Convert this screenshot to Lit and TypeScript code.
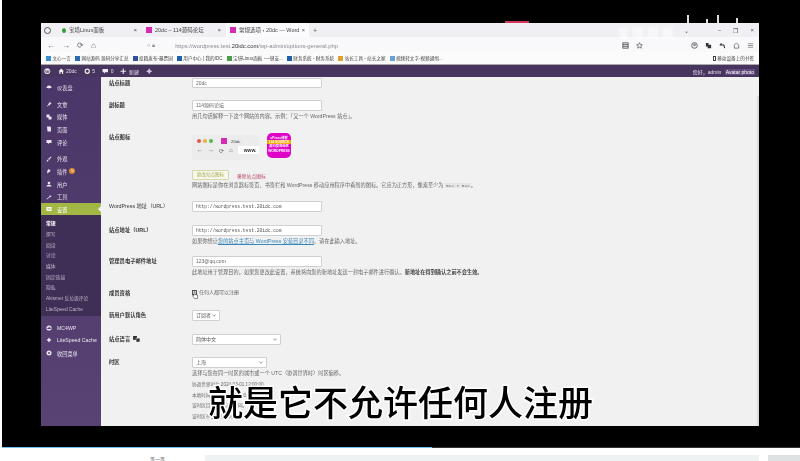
import { LitElement, html, css, svg } from "lit";
import { customElement } from "lit/decorators.js";

const menuIcon = (k: string) => {
  const shapes: Record<string, unknown> = {
    gauge: svg`<path d="M1 8a5 5 0 0 1 10 0z"/><rect x="5" y="5" width="2" height="4"/>`,
    pin: svg`<path d="M7 1l4 4-2 1-2 3-1-1-3 3-1-1 3-3-1-1 3-2z"/>`,
    media: svg`<rect x="1" y="1" width="6" height="6"/><rect x="5" y="5" width="6" height="6"/>`,
    page: svg`<path d="M2 1h7l1 2v8H3z"/>`,
    comment: svg`<path d="M1 2h10v6H6l-2 3V8H1z"/>`,
    brush: svg`<path d="M10 1l1 1-5 6-2-2zM3 7l2 2-1 2H1z"/>`,
    plug: svg`<path d="M4 1l2 3 2-1 1 2-2 3-2 1-2 2-1-1 1-2-1-2 2-2z"/>`,
    user: svg`<circle cx="6" cy="4" r="2.6"/><path d="M1 11c0-5 10-5 10 0z"/>`,
    tool: svg`<path d="M10 1L7 3v2L1 10l1 1 6-5h2l1-3-2 1-1-1z"/>`,
    settings: svg`<rect x="1" y="2" width="10" height="8"/><path d="M3 4h6v1H3zM3 7h6v1H3z" fill="#a3b745"/>`,
    cloud: svg`<circle cx="6" cy="6" r="5.2"/><path d="M3 8h6a1.6 1.6 0 0 0-1-3 2 2 0 0 0-3.6 1A1 1 0 0 0 3 8z" fill="#4f3a6d"/>`,
    gem: svg`<path d="M6 1l2 3 3 2-3 2-2 3-2-3-3-2 3-2z"/>`,
    collapse: svg`<circle cx="6" cy="6" r="5"/><circle cx="6" cy="6" r="1.8" fill="#4f3a6d"/>`,
  };
  return html`<svg class="mi" viewBox="0 0 12 12" fill="currentColor">${shapes[k]}</svg>`;
};

const chev = svg`<path d="M.3.5L2 2.300 3.700.5" fill="none" stroke="#555" stroke-width=".6"/>`;

const groupA = [["gauge", "仪表盘", "mt"], ["pin", "文章", "mt4"], ["media", "媒体", ""], ["page", "页面", ""], ["comment", "评论", ""]];
const groupB = [["brush", "外观", "mt5"], ["plug", "插件", ""], ["user", "用户", ""], ["tool", "工具", ""]];
const subs = ["撰写", "阅读", "讨论", "媒体", "固定链接", "隐私", "Akismet 反垃圾评论", "LiteSpeed Cache"];
const bookmarks: [string, string][] = [
  ["#3a8fd0", "文心一言"], ["#2b6cb0", "网站源码 源码分享汇总"], ["#30509a", "投稿发布-暴票园"],
  ["#1d5fa8", "用户中心 | 我的IDC"], ["#4aa04a", "宝塔Linux面板 -一键安..."], ["#1d5fa8", "财务系统 - 财务系统"],
  ["#e0a030", "站长工具 - 站长之家"], ["#6a9fd8", "视频转文字-视频通缉..."],
];

@customElement("app-root")
export class AppRoot extends LitElement {
  static styles = css`
    :host { display: block; width: 800px; height: 461px; overflow: hidden; background: #fff; font-family: "Liberation Sans","Noto Sans CJK SC",sans-serif; position: relative; }
    .video { height: 447px; margin-left: 2px; background: #000; padding: 23px 41px 0 39px; box-sizing: border-box; }
    .progress { height: 1px; margin-left: 2px; background: linear-gradient(90deg,#6fc3ee 0,#6fc3ee 430px,#333 430px,#333 100%); }
    .below { display: flex; height: 13px; padding: 7px 0 0 150px; box-sizing: border-box; gap: 9px; }
    .below span { font-size: 5px; color: #666; width: 46px; }
    .below i { flex: 1; background: #eef2f2; height: 7px; display: block; }
    .below b { width: 32px; height: 7px; background: #dfe2e2; display: block; }

    .win { width: 718px; height: 403px; background: #f1f1f1; display: flex; flex-direction: column; overflow: hidden; filter: blur(0.6px); color: #3c434a; }
    .tabs { height: 14px; background: #f0f0f4; display: flex; align-items: center; padding-left: 3px; flex: none; }
    .tabs .acct { width: 7px; height: 7px; border: 1px solid #555; border-radius: 50%; box-sizing: border-box; margin-right: 7px; }
    .tab { width: 83px; height: 14px; display: flex; align-items: center; gap: 3px; font-size: 5.5px; color: #444; padding: 0 4px; box-sizing: border-box; margin-right: 1px; white-space: nowrap; }
    .tab.on { background: #fbfbfd; }
    .tab .t { flex: 1; overflow: hidden; }
    .fav { width: 6px; height: 6px; background: #d62bb5; flex: none; }
    .fav.g { background: #3c9a3c; border-radius: 50%; width: 4px; height: 5px; }
    .plus { font-size: 7px; color: #666; margin-left: 3px; }
    .winbtns { margin-left: auto; display: flex; gap: 12px; padding-right: 5px; font-size: 6px; color: #555; align-items: center; }
    .winbtns .sp { width: 5px; }

    .bar { height: 15px; background: #f9f9fb; display: flex; align-items: center; padding: 2px 5px 0 6px; box-sizing: border-box; flex: none; color: #555; }
    .navs { display: flex; gap: 7px; font-size: 8px; width: 100px; color: #666; }
    .addr { font-size: 5.8px; color: #8a8a95; flex: 1; display: flex; align-items: center; gap: 4px; }
    .addr b { color: #333; font-weight: 400; }
    .addr .u { margin-left: 16px; }
    .tools { display: flex; gap: 7px; align-items: center; }
    .tools svg { width: 7px; height: 7px; }
    .tools.left { margin-right: 48px; }

    .marks { height: 13px; background: #fbfbfc; display: flex; align-items: center; padding-left: 5px; font-size: 4.6px; color: #444; flex: none; border-bottom: 1px solid #aaa; box-sizing: border-box; white-space: nowrap; }
    .mark { display: flex; align-items: center; gap: 1.5px; margin-right: 4px; }
    .mark i { width: 5px; height: 5px; display: block; flex: none; }
    .marks .end { margin-left: auto; margin-right: 5px; display: flex; align-items: center; gap: 1px; }
    .marks .end i { width: 3px; height: 5px; border: 1px solid #444; box-sizing: border-box; display: block; }

    .admin { height: 12px; background: #47345f; display: flex; align-items: center; color: #e4e0ea; font-size: 5px; padding: 0 4px 0 3px; flex: none; white-space: nowrap; }
    .admin .it { display: flex; align-items: center; gap: 2px; margin-right: 7px; }
    .admin svg { width: 6.5px; height: 6.5px; }
    .admin .me { margin-left: auto; }
    .admin .me em { font-style: normal; color: #fff; background: #5f4a7a; padding: 0 1px; margin-left: 2px; }

    .body { flex: 1; display: flex; min-height: 0; position: relative; }
    .side { width: 60px; flex: none; background: linear-gradient(#4a3668,#594274); color: #e8e4ee; font-size: 5.2px; }
    .item { height: 12.7px; display: flex; align-items: center; gap: 5px; padding-left: 5px; white-space: nowrap; }
    .item.mt { margin-top: 4px; }
    .item.mt4 { margin-top: 4px; }
    .item.mt5 { margin-top: 4px; }
    .item.cur { background: #a3b745; color: #fff; height: 12px; position: relative; }
    .item.cur::after { content: ""; position: absolute; right: 0; top: 3px; border: 3px solid transparent; border-right-color: #f1f1f1; }
    .mi { width: 6px; height: 6px; flex: none; }
    .badge { width: 6px; height: 6px; border-radius: 50%; background: #d98a2b; color: #fff; font-size: 4px; line-height: 6px; text-align: center; margin-left: -3px; }
    .sub { background: #3f2f57; padding: 4px 0 1px 5px; font-size: 4.8px; color: #bdb5c9; margin-bottom: 5px; }
    .sub div { height: 10.7px; line-height: 10.7px; white-space: nowrap; }
    .sub .first { color: #fff; font-weight: 700; }

    .main { flex: 1; padding: 1px 0 0 8px; font-size: 5.3px; color: #3c434a; position: relative; overflow: hidden; }
    .row { display: grid; grid-template-columns: 83px 1fr; align-items: start; }
    .g12 { margin-bottom: 12px; } .g13 { margin-bottom: 13px; } .g11 { margin-bottom: 11px; } .g10 { margin-bottom: 10px; }
    .lab { font-weight: 700; color: #333; line-height: 10px; white-space: nowrap; display: flex; align-items: center; gap: 3px; }
    .lab.thin { font-weight: 400; }
    .inp { width: 130px; height: 10px; background: #fff; border: 1px solid #d0d0d4; border-radius: 1px; box-sizing: border-box; font-size: 5px; line-height: 8px; padding-left: 3px; color: #666; white-space: nowrap; }
    .inp.mono { font-family: "Liberation Mono",monospace; font-size: 4.6px; color: #555; }
    .inp.h11 { height: 11px; line-height: 9px; }
    .d { font-size: 5.2px; color: #666; margin-top: 1px; line-height: 8px; white-space: nowrap; }
    .d a { color: #3a86b8; text-decoration: underline; }
    .d code { background: #e6e6e6; padding: 0 1px; font-size: 4.4px; font-family: "Liberation Mono",monospace; }
    .d strong { color: #444; }
    .icons { display: flex; gap: 8px; align-items: flex-start; padding-top: 1px; }
    .prev { width: 67px; height: 25px; background: #ececec; margin-top: 2px; box-sizing: border-box; padding: 3px 0 0 5px; }
    .dots { display: flex; gap: 2px; align-items: center; font-size: 4.4px; }
    .dots i { width: 4px; height: 4px; border-radius: 50%; display: block; }
    .dots .r { background: #e8574f; } .dots .o { background: #eab13c; } .dots .n { background: #5db54c; }
    .dots u { width: 6px; height: 6px; background: #d62bb5; margin: 0 2px 0 6px; display: block; }
    .navp { display: flex; gap: 5px; font-size: 6px; margin-top: 2px; align-items: center; color: #555; }
    .navp span.www { background: #fff; font-weight: 700; padding: 1px 2px 1px 6px; font-size: 5px; color: #333; flex: 1; }
    .logo { width: 24px; height: 25px; border-radius: 5px; background: #e003c8; color: #fff; font-size: 3.3px; line-height: 4.2px; text-align: center; font-weight: 700; padding-top: 3px; box-sizing: border-box; white-space: nowrap; overflow: hidden; }
    .logo span { display: block; }
    .logo .y { background: #f5a800; }
    .btns { display: flex; align-items: center; gap: 8px; margin-top: 10px; }
    .btn { width: 37px; height: 10px; border: 1px solid #d5d8a8; background: #f7f7ee; color: #a7ad4a; font-size: 4.6px; line-height: 8px; text-align: center; box-sizing: border-box; border-radius: 1px; }
    .rm { color: #b3445e; font-size: 4.8px; }
    .chk { display: flex; align-items: center; gap: 2px; font-size: 5px; color: #666; line-height: 8px; position: relative; }
    .chk i { width: 5px; height: 5px; border: 1px solid #555; box-sizing: border-box; background: #fff; display: block; position: relative; }
    .cursor { position: absolute; left: 0; top: 3px; width: 6px; height: 8px; }
    .sel { height: 11px; background: #fff; border: 1px solid #d0d0d4; box-sizing: border-box; border-radius: 1px; font-size: 5px; line-height: 9px; padding: 0 3px; display: flex; justify-content: space-between; align-items: center; color: #555; }
    .w28 { width: 28px; } .w89 { width: 89px; } .w75 { width: 75px; }
    .chev { width: 4px; height: 3px; }
    .tiny { font-size: 4.6px; color: #666; line-height: 10.6px; margin-top: 3px; }
    .scroll { position: absolute; right: 0; top: 19px; bottom: 0; width: 2px; background: #dcdcdc; }

    .caption { position: absolute; left: 208px; top: 381px; font-family: "Noto Sans CJK SC",sans-serif; font-size: 35px; line-height: 40px; font-weight: 500; color: #000; white-space: nowrap; -webkit-text-stroke: 3px #fff; paint-order: stroke fill; filter: blur(0.3px); }
    .red { position: absolute; left: 505px; top: 21px; width: 24px; height: 2px; background: #d3355a; filter: blur(0.5px); }
    .wm { position: absolute; left: 617px; top: 24px; font-size: 12px; font-weight: 700; letter-spacing: 3px; color: rgba(255,255,255,.75); filter: blur(1.2px); white-space: nowrap; }
    .tick { position: absolute; top: 15px; width: 2px; height: 8px; background: #ddd; filter: blur(.6px); }
    .t1 { left: 687px; } .t2 { left: 706px; top: 19px; height: 4px; } .t3 { left: 717px; } .t4 { left: 736px; top: 18px; height: 5px; }
  `;

  render() {
    return html`
      <div class="video">
        <div class="win">
          <div class="tabs">
            <span class="acct"></span>
            <div class="tab"><span class="fav g"></span><span class="t">宝塔Linux面板</span>×</div>
            <div class="tab"><span class="fav"></span><span class="t">20dc – 114源码论坛</span>×</div>
            <div class="tab on"><span class="fav"></span><span class="t">常规选项 ‹ 20dc — WordPress</span>×</div>
            <span class="plus">+</span>
            <div class="winbtns"><span>⌄</span><span class="sp"></span><span>−</span><span>❐</span><span>×</span></div>
          </div>
          <div class="bar">
            <div class="navs"><span>←</span><span>→</span><span>⟳</span><span>⌂</span></div>
            <div class="addr"><span>○ 🔒︎</span><span class="u">https://wordpress.test.<b>20idc.com</b>/wp-admin/options-general.php</span></div>
            <div class="tools left">
              <svg viewBox="0 0 8 8" fill="none" stroke="#555"><rect x="1" y="1" width="6" height="6"/><path d="M1 3h6M1 5h6"/></svg>
              <svg viewBox="0 0 8 8" fill="none" stroke="#555" stroke-width=".8"><path d="M4 .8l1 2.2 2.3.2-1.8 1.5.6 2.4L4 5.8 1.900 7.100l.6-2.400L.7 3.200 3 3z"/></svg>
            </div>
            <div class="tools">
              <svg viewBox="0 0 8 8" fill="none" stroke="#555"><circle cx="4" cy="4" r="3.200"/><circle cx="4" cy="3.300" r="1"/></svg>
              <svg viewBox="0 0 8 8" fill="#333"><path d="M1 1h3v2h3v4H3V5H1z"/></svg>
              <svg viewBox="0 0 8 8" fill="none" stroke="#333" stroke-width="1.200"><path d="M1 3.500h4.500L6.500 7M1 3.500L3 1.500"/></svg>
              <svg viewBox="0 0 8 8" fill="none" stroke="#555" stroke-width=".8"><path d="M4 1L1.500 3.500V7h5V3.500z"/></svg>
              <svg viewBox="0 0 8 8" fill="#999"><path d="M1 1.500h6v1H1zM1 3.500h6v1H1zM1 5.500h6v1H1z"/></svg>
            </div>
          </div>
          <div class="marks">
            ${bookmarks.map(([c, t]) => html`<span class="mark"><i style="background:${c}"></i>${t}</span>`)}
            <span class="end"><i></i>移动设备上的书签</span>
          </div>
          <div class="admin">
            <span class="it"><svg viewBox="0 0 12 12"><circle cx="6" cy="6" r="5.500" fill="#ddd"/><path d="M2.500 4l2 5 1.500-4 1.500 4 2-5" fill="none" stroke="#47345f" stroke-width="1.200"/></svg></span>
            <span class="it"><svg viewBox="0 0 12 12" fill="#eee"><path d="M6 1l5 5H9.500v5h-2V8h-3v3h-2V6H1z"/></svg>20dc</span>
            <span class="it"><svg viewBox="0 0 12 12" fill="none" stroke="#eee" stroke-width="2.200"><circle cx="6" cy="6" r="3.800"/></svg>5</span>
            <span class="it"><svg viewBox="0 0 12 12" fill="#eee"><path d="M1 2h10v6H6l-2 3V8H1z"/></svg>0</span>
            <span class="it"><svg viewBox="0 0 12 12" fill="#eee"><path d="M5 1h2v4h4v2H7v4H5V7H1V5h4z"/></svg>新建</span>
            <span class="it"><svg viewBox="0 0 12 12" fill="#cfc6dc"><path d="M6 0l2 4 4 2-4 2-2 4-2-4-4-2 4-2z"/></svg></span>
            <span class="me">您好，admin <em>Avatar photo</em></span>
          </div>
          <div class="body">
            <nav class="side">
              ${groupA.map(([i, t, c]) => html`<div class="item ${c}">${menuIcon(i)}${t}</div>`)}
              ${groupB.map(([i, t, c]) => html`<div class="item ${c}">${menuIcon(i)}${t}${t === "插件" ? html`<span class="badge">5</span>` : ""}</div>`)}
              <div class="item cur">${menuIcon("settings")}设置</div>
              <div class="sub">
                <div class="first">常规</div>
                ${subs.map((s) => html`<div>${s}</div>`)}
              </div>
              <div class="item">${menuIcon("cloud")}MC4WP</div>
              <div class="item">${menuIcon("gem")}LiteSpeed Cache</div>
              <div class="item">${menuIcon("collapse")}收回菜单</div>
            </nav>
            <main class="main">
              <div class="row g12"><div class="lab">站点标题</div><div class="inp">20dc</div></div>
              <div class="row g12"><div class="lab">副标题</div><div>
                <div class="inp h11">114源码论坛</div>
                <div class="d">用几句话解释一下这个网站的内容。示例：「又一个 WordPress 站点」。</div>
              </div></div>
              <div class="row g11"><div class="lab">站点图标</div><div>
                <div class="icons">
                  <div class="prev">
                    <div class="dots"><i class="r"></i><i class="o"></i><i class="n"></i><u></u>20dc</div>
                    <div class="navp"><span>←</span><span>→</span><span>⟳</span><span>⌂</span><span class="www">www.</span></div>
                  </div>
                  <div class="logo"><span>oPress博客</span><span class="y">114 SOURCE</span><span>源码交流社区</span><span>WORDPRESS</span></div>
                </div>
                <div class="btns"><div class="btn">更改站点图标</div><span class="rm">移除站点图标</span></div>
                <div class="d">网站图标是你在浏览器标签页、书签栏和 WordPress 移动应用程序中看到的图标。它应为正方形，像素至少为 <code>512 × 512</code>。</div>
              </div></div>
              <div class="row g13"><div class="lab thin">WordPress 地址（URL）</div><div class="inp mono h11">http://wordpress.test.20idc.com</div></div>
              <div class="row g11"><div class="lab">站点地址（URL）</div><div>
                <div class="inp mono h11">http://wordpress.test.20idc.com</div>
                <div class="d">如果你想让<a>您的站点主页与 WordPress 安装目录不同</a>，请在此输入地址。</div>
              </div></div>
              <div class="row g12"><div class="lab">管理员电子邮件地址</div><div>
                <div class="inp h11">123@qq.com</div>
                <div class="d">此地址用于管理目的。如果您更改此设置，系统将向您的新地址发送一封电子邮件进行确认。<strong>新地址在得到确认之前不会生效。</strong></div>
              </div></div>
              <div class="row g12"><div class="lab">成员资格</div><div class="chk"><i></i>任何人都可以注册
                <svg class="cursor" viewBox="0 0 6 8"><path d="M2 .5v4L1 4 .6 5 2.500 7.500h3V4L3 3.500V.5z" fill="#fff" stroke="#222" stroke-width=".5"/></svg></div></div>
              <div class="row g13"><div class="lab">新用户默认角色</div><div class="sel w28">订阅者<svg class="chev" viewBox="0 0 4 3">${chev}</svg></div></div>
              <div class="row g12"><div class="lab">站点语言 <svg viewBox="0 0 8 7" width="7" height="6" fill="#333"><rect x="0" y="0" width="4.500" height="4.500"/><rect x="3.500" y="2.500" width="4.500" height="4.500" stroke="#f1f1f1" stroke-width=".5"/></svg></div><div class="sel w89">简体中文<svg class="chev" viewBox="0 0 4 3">${chev}</svg></div></div>
              <div class="row"><div class="lab">时区</div><div>
                <div class="sel w75">上海<svg class="chev" viewBox="0 0 4 3">${chev}</svg></div>
                <div class="d">选择与您在同一时区的城市或一个 UTC（协调世界时）时区偏移。</div>
                <div class="tiny">
                  <div>协调世界时为 2024-03-01 12:00:00。</div>
                  <div>本地时间为 2024-03-01 20:00:00。</div>
                  <div>该时区目前使用标准时间。</div>
                  <div>该时区不使用夏令时。</div>
                </div>
              </div></div>
              <div class="scroll"></div>
            </main>
          </div>
        </div>
      </div>
      <div class="progress"></div>
      <div class="below"><span>等一等</span><i></i><b></b></div>
      <div class="red"></div>
      <div class="wm">宝塔面板</div>
      <span class="tick t1"></span><span class="tick t2"></span><span class="tick t3"></span><span class="tick t4"></span>
      <div class="caption">就是它不允许任何人注册</div>
    `;
  }
}
